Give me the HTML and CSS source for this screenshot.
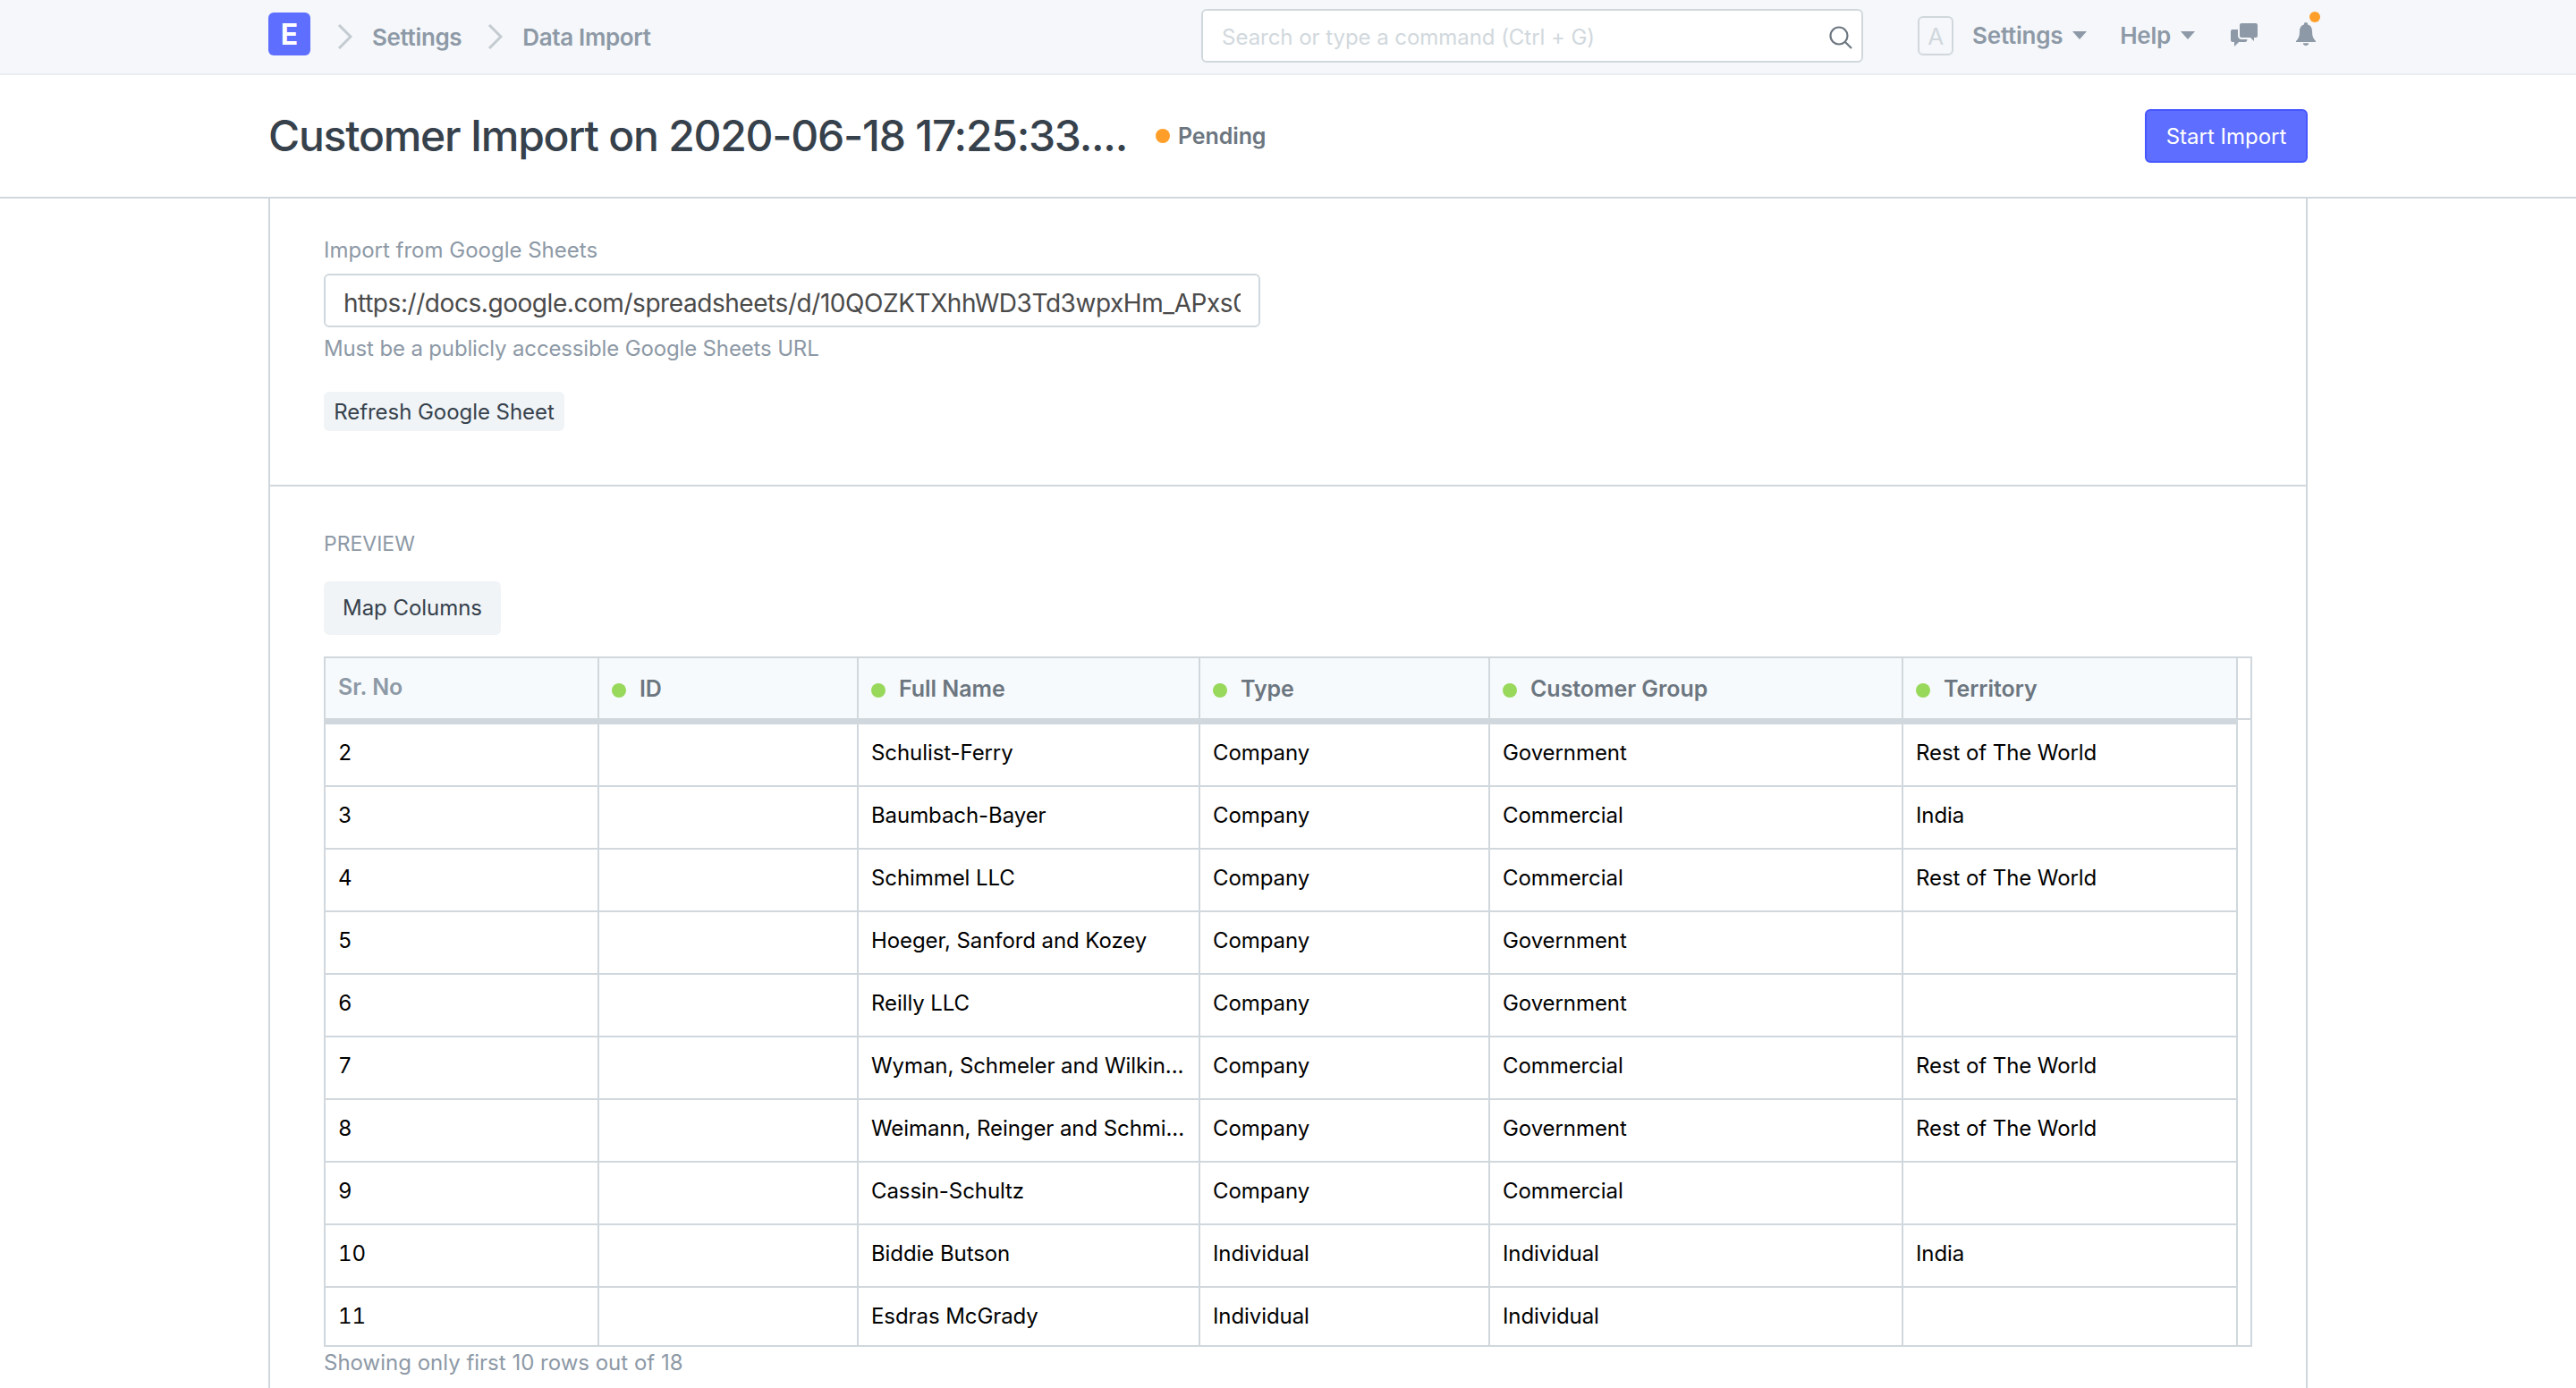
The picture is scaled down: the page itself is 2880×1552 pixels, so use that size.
FILE: index.html
```html
<!DOCTYPE html>
<html lang="en">
<head>
    <meta charset="UTF-8" />
    <title>Customer Import on 2020-06-18 17:25:33</title>
    <link rel="stylesheet" href="styles.css">
</head>
<body>
    <!-- Navbar -->
    <nav class="navbar">
        <div class="navbar-inner">
            <div class="app-logo">E</div>
            <svg class="crumb-arrow" viewBox="0 0 17 28"><path d="M2 1l13 13L2 27" /></svg>
            <a class="crumb">Settings</a>
            <svg class="crumb-arrow" viewBox="0 0 17 28"><path d="M2 1l13 13L2 27" /></svg>
            <a class="crumb">Data Import</a>

            <div class="search-box">
                <span class="search-placeholder">Search or type a command (Ctrl + G)</span>
                <svg class="search-icon" viewBox="0 0 26 26"><circle cx="11" cy="11" r="9.500" /><path d="M18 18l7 7" /></svg>
            </div>

            <div class="avatar">A</div>
            <a class="nav-menu">Settings<span class="caret"></span></a>
            <a class="nav-menu nav-help">Help<span class="caret"></span></a>
            <svg class="chat-icon" viewBox="0 0 30 26"><path d="M12 0h16a2 2 0 0 1 2 2v12a2 2 0 0 1-2 2h-2v4l-4-4H12a2 2 0 0 1-2-2V2a2 2 0 0 1 2-2z" /><path d="M2 7h6v7c0 2.200 1.800 4 4 4h6.500c-.2 1.800-1 3-2.500 3H9l-5 5v-5H2a2 2 0 0 1-2-2V9a2 2 0 0 1 2-2z" /></svg>
            <div class="bell">
                <svg class="bell-icon" viewBox="0 0 22 26"><path d="M11 0c1.300 0 2.100.8 2.100 2v.6C16.600 3.500 18 6.500 18 10c0 5 1 8 4 11v1H0v-1c3-3 4-6 4-11 0-3.500 1.400-6.500 4.900-7.400V2C8.900.8 9.700 0 11 0zM7.800 23.200h6.400C14 25 12.700 26 11 26s-3-1-3.200-2.800z" /></svg>
                <span class="bell-dot"></span>
            </div>
        </div>
    </nav>

    <!-- Page head -->
    <header class="page-head">
        <div class="page-head-inner">
            <h1 class="page-title">Customer Import on 2020-06-18 17:25:33....</h1>
            <span class="indicator"><span class="dot dot-orange"></span>Pending</span>
            <button class="btn-primary">Start Import</button>
        </div>
    </header>

    <main class="page-body">
        <section class="sheet-section">
            <label class="field-label">Import from Google Sheets</label>
            <input class="field-input" type="text" value="https://docs.google.com/spreadsheets/d/10QOZKTXhhWD3Td3wpxHm_APxs0LYhZGxzFnk" />
            <p class="field-help">Must be a publicly accessible Google Sheets URL</p>
            <button class="btn-small">Refresh Google Sheet</button>
        </section>

        <section class="preview-section">
            <div class="section-label">PREVIEW</div>
            <button class="btn-default">Map Columns</button>

            <div class="table-wrap">
                <table class="preview-table">
                    <colgroup>
                        <col class="col-sr" />
                        <col class="col-id" />
                        <col class="col-name" />
                        <col class="col-type" />
                        <col class="col-group" />
                        <col class="col-territory" />
                    </colgroup>
                    <thead>
                        <tr>
                            <th class="th-sr">Sr. No</th>
                            <th><span class="dot dot-green"></span>ID</th>
                            <th><span class="dot dot-green"></span>Full Name</th>
                            <th><span class="dot dot-green"></span>Type</th>
                            <th><span class="dot dot-green"></span>Customer Group</th>
                            <th><span class="dot dot-green"></span>Territory</th>
                        </tr>
                    </thead>
                    <tbody id="rows">
                        <tr><td>2</td><td></td><td>Schulist-Ferry</td><td>Company</td><td>Government</td><td>Rest of The World</td></tr>
                        <tr><td>3</td><td></td><td>Baumbach-Bayer</td><td>Company</td><td>Commercial</td><td>India</td></tr>
                        <tr><td>4</td><td></td><td>Schimmel LLC</td><td>Company</td><td>Commercial</td><td>Rest of The World</td></tr>
                        <tr><td>5</td><td></td><td>Hoeger, Sanford and Kozey</td><td>Company</td><td>Government</td><td></td></tr>
                        <tr><td>6</td><td></td><td>Reilly LLC</td><td>Company</td><td>Government</td><td></td></tr>
                        <tr><td>7</td><td></td><td>Wyman, Schmeler and Wilkin...</td><td>Company</td><td>Commercial</td><td>Rest of The World</td></tr>
                        <tr><td>8</td><td></td><td>Weimann, Reinger and Schmi...</td><td>Company</td><td>Government</td><td>Rest of The World</td></tr>
                        <tr><td>9</td><td></td><td>Cassin-Schultz</td><td>Company</td><td>Commercial</td><td></td></tr>
                        <tr><td>10</td><td></td><td>Biddie Butson</td><td>Individual</td><td>Individual</td><td>India</td></tr>
                        <tr><td>11</td><td></td><td>Esdras McGrady</td><td>Individual</td><td>Individual</td><td></td></tr>
                    </tbody>
                </table>
                <div class="table-filler"><div class="filler-head"></div></div>
            </div>
            <p class="table-note">Showing only first 10 rows out of 18</p>
        </section>
    </main>
</body>
</html>
```

FILE: styles.css
```css
/* Base */
body {
    margin: 0;
    height: 100vh;
    display: flex;
    flex-direction: column;
    font-family: 'Inter', 'Liberation Sans', sans-serif;
    font-size: 24px;
    color: #36414c;
    background: #fff;
    overflow: hidden;
}

button {
    font-family: inherit;
    cursor: pointer;
}

/* Navbar */
.navbar {
    flex: none;
    height: 82px;
    background: #f5f7fa;
    border-bottom: 2px solid #ebeef0;
}

.navbar-inner {
    width: 2280px;
    height: 100%;
    margin: 0 auto;
    display: flex;
    align-items: center;
}

.app-logo {
    width: 47px;
    height: 48px;
    margin-bottom: 6px;
    border-radius: 6px;
    background: #5e6eff;
    color: #fff;
    font-size: 32px;
    font-weight: 700;
    display: flex;
    align-items: center;
    justify-content: center;
}

.crumb-arrow {
    width: 17px;
    height: 28px;
    margin: 0 22px 0 29px;
    fill: none;
    stroke: #c4cbd1;
    stroke-width: 3;
}

.app-logo + .crumb-arrow {
    margin-left: 30px;
}

.crumb {
    font-size: 26px;
    letter-spacing: -0.35px;
    font-weight: 600;
    color: #8d99a6;
}

.search-box {
    width: 740px;
    height: 60px;
    margin-left: auto;
    margin-bottom: 2px;
    box-sizing: border-box;
    background: #fff;
    border: 2px solid #d1d8dd;
    border-radius: 6px;
    padding: 3px 10px 0 21px;
    display: flex;
    align-items: center;
    justify-content: space-between;
}

.search-placeholder {
    font-size: 24px;
    letter-spacing: -0.05px;
    color: #d1d8dd;
}

.search-icon {
    width: 26px;
    height: 26px;
    fill: none;
    stroke: #6c7680;
    stroke-width: 2.2;
}

.avatar {
    width: 40px;
    height: 44px;
    margin-left: 61px;
    margin-bottom: 2px;
    box-sizing: border-box;
    border: 2px solid #d1d8dd;
    border-radius: 6px;
    color: #d1d8dd;
    font-size: 26px;
    display: flex;
    align-items: center;
    justify-content: center;
}

.nav-menu {
    margin-left: 21px;
    padding-bottom: 3px;
    font-size: 26px;
    letter-spacing: -0.25px;
    font-weight: 600;
    color: #8d99a6;
    display: flex;
    align-items: center;
}

.nav-help {
    margin-left: 37px;
}

.caret {
    margin-left: 11px;
    width: 0;
    height: 0;
    border-left: 8px solid transparent;
    border-right: 8px solid transparent;
    border-top: 9px solid #8d99a6;
}

.chat-icon {
    width: 30px;
    height: 26px;
    margin-left: 40px;
    margin-bottom: 4px;
    fill: #8d99a6;
}

.bell {
    position: relative;
    width: 22px;
    height: 26px;
    margin-left: 43px;
    margin-right: -9px;
    margin-bottom: 6px;
}

.bell-icon {
    width: 22px;
    height: 26px;
    fill: #8d99a6;
    display: block;
}

.bell-dot {
    position: absolute;
    top: -12px;
    right: -5px;
    width: 12px;
    height: 12px;
    border-radius: 50%;
    background: #ff9f2a;
}

/* Page head */
.page-head {
    flex: none;
    height: 136px;
    border-bottom: 2px solid #d1d8dd;
}

.page-head-inner {
    width: 2280px;
    height: 100%;
    margin: 0 auto;
    display: flex;
    align-items: center;
}

.page-title {
    margin: 0 0 2px;
    font-size: 48px;
    font-weight: 550;
    letter-spacing: -1.23px;
    color: #36414c;
}

.indicator {
    margin-left: 32px;
    font-size: 25px;
    letter-spacing: -0.1px;
    font-weight: 600;
    color: #6c7680;
    display: flex;
    align-items: center;
}

.dot {
    display: inline-block;
    width: 16px;
    height: 16px;
    border-radius: 50%;
    margin-right: 9px;
}

.dot-orange {
    background: #ff9f2a;
}

.dot-green {
    background: #98d85b;
    margin-right: 15px;
    vertical-align: -1px;
}

.btn-primary {
    margin-left: auto;
    width: 182px;
    height: 60px;
    background: #5e6eff;
    border: 2px solid #4757ff;
    border-radius: 6px;
    color: #fff;
    font-size: 24px;
}

/* Form area */
.page-body {
    flex: 1;
    min-height: 0;
    width: 2280px;
    margin: 0 auto;
    box-sizing: border-box;
    border-left: 2px solid #d1d8dd;
    border-right: 2px solid #d1d8dd;
}

.sheet-section {
    height: 322px;
    box-sizing: border-box;
    border-bottom: 2px solid #d1d8dd;
    padding: 44px 60px 0;
}

.field-label {
    display: block;
    height: 28px;
    line-height: 28px;
    font-size: 24px;
    color: #8d99a6;
}

.field-input {
    display: block;
    box-sizing: border-box;
    width: 1047px;
    height: 60px;
    margin-top: 12px;
    padding: 5px 20px 0;
    background: #fff;
    border: 2px solid #d1d8dd;
    border-radius: 6px;
    color: #4a4a4a;
    font-family: inherit;
    font-size: 28px;
    letter-spacing: -0.44px;
    outline: none;
}

.field-help {
    margin: 10px 0 0;
    height: 28px;
    line-height: 28px;
    font-size: 24px;
    letter-spacing: -0.15px;
    color: #8d99a6;
}

.btn-small {
    display: block;
    margin-top: 34px;
    width: 269px;
    height: 44px;
    padding: 0;
    background: #f0f4f7;
    border: 0;
    border-radius: 6px;
    color: #36414c;
    font-size: 24px;
    letter-spacing: -0.05px;
}

.preview-section {
    padding: 50px 60px 0;
}

.section-label {
    height: 28px;
    line-height: 28px;
    font-size: 23px;
    color: #8d99a6;
}

.btn-default {
    display: block;
    margin-top: 28px;
    width: 198px;
    height: 60px;
    padding: 0 0 2px;
    background: #f0f4f7;
    border: 0;
    border-radius: 6px;
    color: #36414c;
    font-size: 24px;
    letter-spacing: -0.05px;
}

/* Preview table */
.table-wrap {
    display: flex;
    width: 2156px;
    height: 772px;
    margin-top: 24px;
    box-sizing: border-box;
    border: 2px solid #d1d8dd;
    overflow: hidden;
}

.preview-table {
    width: 2138px;
    flex: none;
    table-layout: fixed;
    border-collapse: separate;
    border-spacing: 0;
    font-size: 24px;
    color: #000;
}

.col-sr { width: 306px; }
.col-id { width: 290px; }
.col-name { width: 382px; }
.col-type { width: 324px; }
.col-group { width: 462px; }
.col-territory { width: 374px; }

.preview-table th {
    height: 67px;
    padding: 0 14px;
    background: #f7fafc;
    border-right: 2px solid #d1d8dd;
    border-bottom: 7px solid #d1d8dd;
    color: #6c7680;
    font-size: 25px;
    font-weight: 600;
    letter-spacing: -0.05px;
    text-align: left;
    white-space: nowrap;
}

.preview-table .th-sr {
    color: #8d99a6;
    padding-bottom: 4px;
    height: 63px;
}

.preview-table td {
    height: 63px;
    padding: 0 14px 5px;
    border-right: 2px solid #d1d8dd;
    border-bottom: 2px solid #d1d8dd;
    letter-spacing: -0.08px;
    white-space: nowrap;
}

.preview-table td:first-child {
    font-variant-numeric: tabular-nums;
}

.table-filler {
    flex: 1;
}

.filler-head {
    height: 67px;
    border-bottom: 2px solid #d1d8dd;
}

.table-note {
    margin: 4px 0 0;
    height: 28px;
    line-height: 28px;
    font-size: 24px;
    color: #8d99a6;
}
```
